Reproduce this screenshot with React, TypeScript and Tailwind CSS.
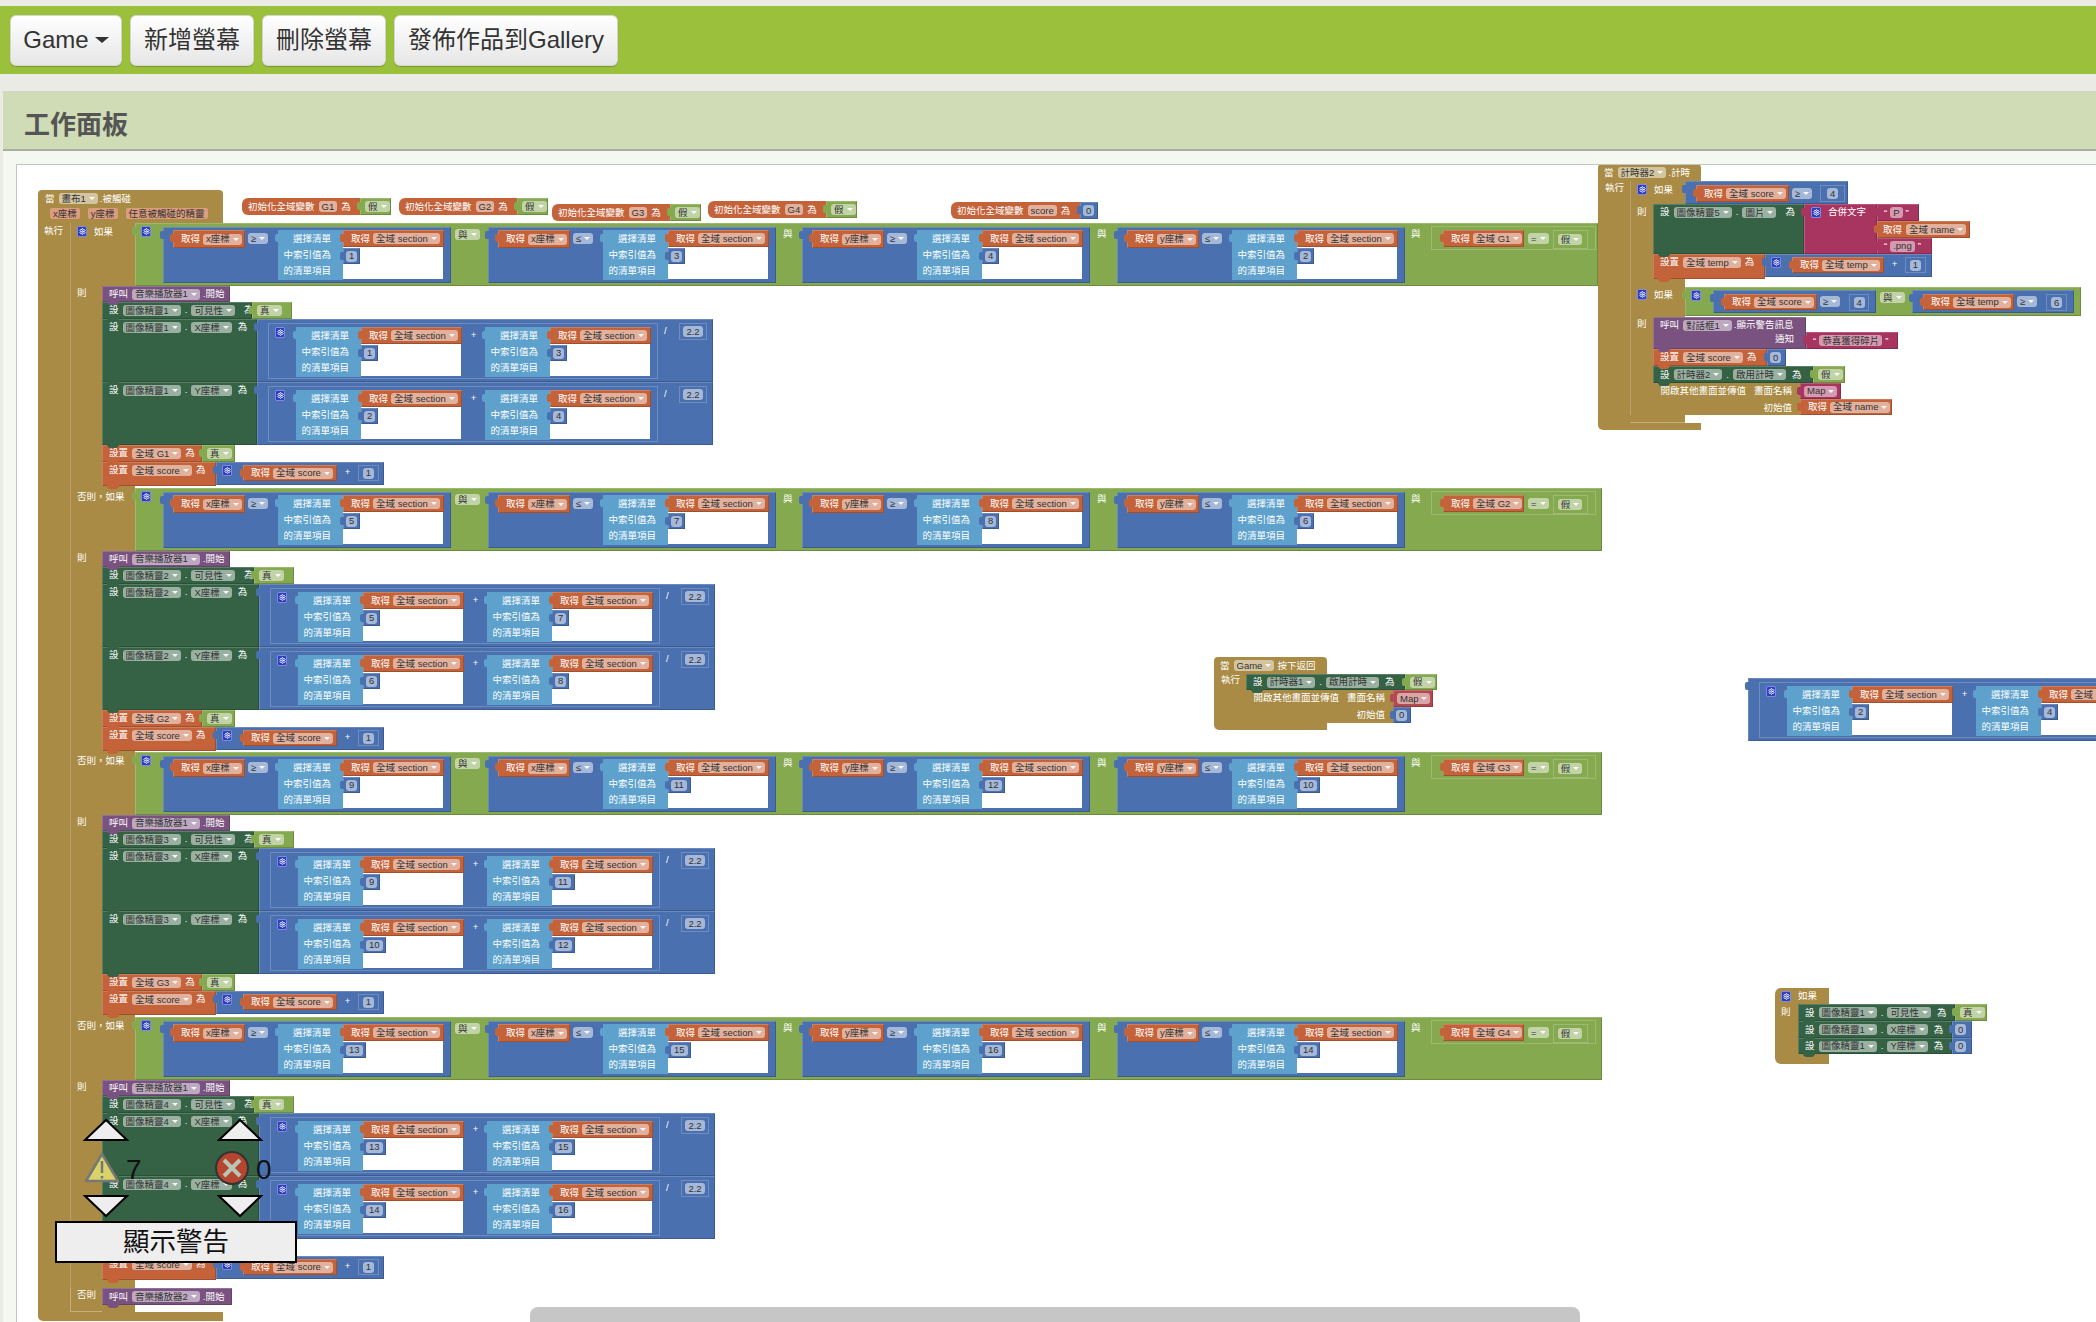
import type { ReactNode } from 'react';
import { Settings } from 'lucide-react';

const TAN = 'bg-[#a98b45]';
const GREEN = 'bg-[#84a94f]';
const BLUE = 'bg-[#4a70af]';
const SKY = 'bg-[#5ea1cd]';
const ORANGE = 'bg-[#c4623a]';
const PURPLE = 'bg-[#7a5280]';
const DARK = 'bg-[#356245]';
const PINK = 'bg-[#a83560]';
const BTN =
  'h-[51px] rounded-[6px] border border-[#d5d5d5] bg-gradient-to-b from-white to-[#e6e6e6] text-[24px] text-[#333] shadow-[0_1px_1px_rgba(0,0,0,0.2)]';

interface BlkProps {
  w: number;
  h: number;
  c: string;
  tab?: boolean;
  nub?: boolean;
  start?: boolean;
  pl?: number;
  pt?: number;
  gap?: number;
  children?: ReactNode;
}

// one block, sized from its props, contents flow inside
function Blk({ w, h, c, tab, nub, start, pl = 5, pt = 0, gap = 4, children }: BlkProps) {
  return (
    <div
      className={`relative shrink-0 flex whitespace-nowrap text-white ${start ? 'items-start' : 'items-center'} ${c} shadow-[inset_1px_1px_0_rgba(255,255,255,0.18),inset_-1px_-1px_0_rgba(0,0,0,0.18)]`}
      style={{ width: w, height: h, paddingLeft: pl, paddingTop: pt, gap }}
    >
      {tab && <span className={`absolute -left-[3px] top-[4px] w-[4px] h-[8px] rounded-l-[2px] ${c}`} />}
      {nub && <span className={`absolute left-[5px] -bottom-[3px] w-[12px] h-[4px] rounded-b-[4px] z-10 ${c}`} />}
      {children}
    </div>
  );
}

// a group placed freely on the workspace
function At({ x, y, children }: { x: number; y: number; children: ReactNode }) {
  return (
    <div className="absolute w-max" style={{ left: x, top: y }}>
      {children}
    </div>
  );
}

function Caret() {
  return <span className="inline-block ml-[3px] w-0 h-0 border-x-[3px] border-t-[3px] border-x-transparent border-t-white/90" />;
}

function F({ t, caret = true }: { t: string; caret?: boolean }) {
  return (
    <span className="inline-flex shrink-0 items-center h-[11px] px-[3px] rounded-[3px] bg-white/50 text-[#333] leading-none">
      {t}
      {caret && <Caret />}
    </span>
  );
}

function Gear() {
  return (
    <span className="shrink-0 flex items-center justify-center w-[10px] h-[11px] rounded-[2px] bg-[#2a3dc4] border border-white/40">
      <Settings size={7} color="#fff" strokeWidth={3} />
    </span>
  );
}

function Get({ w, name, h = 17 }: { w: number; name: string; h?: number }) {
  return (
    <Blk w={w} h={h} c={ORANGE} tab pl={8} gap={3}>
      <span>取得</span>
      <F t={name} />
    </Blk>
  );
}

function Num({ w, t, h = 16 }: { w: number; t: string; h?: number }) {
  return (
    <Blk w={w} h={h} c={BLUE} tab pl={3}>
      <F t={t} caret={false} />
    </Blk>
  );
}

function Bool({ w, t, h = 17 }: { w: number; t: string; h?: number }) {
  return (
    <Blk w={w} h={h} c={GREEN} tab pl={5}>
      <F t={t} />
    </Blk>
  );
}

// number sitting in an outlined socket
function Socket({ w, t, h = 17, caret = false }: { w: number; t: string; h?: number; caret?: boolean }) {
  return (
    <span className="shrink-0 flex items-center justify-center border border-white/20" style={{ width: w, height: h }}>
      <F t={t} caret={caret} />
    </span>
  );
}

function Str({ w, t, h = 17 }: { w: number; t: string; h?: number }) {
  return (
    <Blk w={w} h={h} c={PINK} tab pl={7} gap={3}>
      “ <F t={t} caret={false} /> ”
    </Blk>
  );
}

// 選擇清單 block with its section getter and index
function ListItem({ n }: { n: number }) {
  return (
    <div className="flex shrink-0">
      <div className={`relative flex flex-col items-end gap-[4px] w-[65px] h-[50px] pr-[12px] pt-[3px] leading-[12px] text-white whitespace-nowrap ${SKY}`}>
        <span className={`absolute -left-[3px] top-[4px] w-[4px] h-[8px] rounded-l-[2px] ${SKY}`} />
        <span>選擇清單</span>
        <span>中索引值為</span>
        <span>的清單項目</span>
      </div>
      <div className="w-[101px]">
        <Get w={101} name="全域 section" />
        <div className="w-[100px] h-[32px] pt-[1px] bg-white">
          <Num w={n > 9 ? 23 : 17} t={String(n)} />
        </div>
      </div>
    </div>
  );
}

function Cond({ v, op, n }: { v: string; op: string; n: number }) {
  return (
    <Blk w={288} h={56} c={BLUE} tab start pl={10} pt={3} gap={0}>
      <Get w={72} h={18} name={v} />
      <span className="w-[33px] pl-[3px] pt-[3px]">
        <F t={op} />
      </span>
      <ListItem n={n} />
    </Blk>
  );
}

function MathSet({ a, b }: { a: number; b: number }) {
  return (
    <Blk w={456} h={63} c={BLUE} tab start pl={11} pt={4} gap={0}>
      <div className="shrink-0 flex items-start w-[390px] h-[56px] pl-[6px] pt-[3px] border border-white/20">
        <Gear />
        <span className="w-[11px]" />
        <ListItem n={a} />
        <span className="w-[23px] pt-[2px] text-center leading-[12px]">+</span>
        <ListItem n={b} />
      </div>
      <span className="w-[21px] pl-[6px] pt-[2px] leading-[12px]">/</span>
      <Socket w={28} t="2.2" />
    </Blk>
  );
}

function SetProp({ w, h, s, p, gap = 5 }: { w: number; h: number; s: string; p: string; gap?: number }) {
  return (
    <Blk w={w} h={h} c={DARK} nub start pl={7} pt={3}>
      <span>設</span>
      <F t={s} />
      <span>.</span>
      <F t={p} />
      <span style={{ marginLeft: gap }}>為</span>
    </Blk>
  );
}

function SetVar({ w, h, v }: { w: number; h: number; v: string }) {
  return (
    <Blk w={w} h={h} c={ORANGE} nub start pl={7} pt={3}>
      <span>設置</span>
      <F t={v} />
      <span>為</span>
    </Blk>
  );
}

function Call({ w, h = 16, t }: { w: number; h?: number; t: string }) {
  return (
    <Blk w={w} h={h} c={PURPLE} nub pl={7}>
      <span>呼叫</span>
      <F t={t} />
      <span className="-ml-[1px]">.開始</span>
    </Blk>
  );
}

function PlusOne({ w, g, name }: { w: number; g: number; name: string }) {
  return (
    <Blk w={w} h={23} c={BLUE} tab start pl={6} pt={3} gap={0}>
      <Gear />
      <span className="w-[11px]" />
      <Get w={g} h={16} name={name} />
      <span className="w-[21px] text-center leading-[14px]">+</span>
      <Socket w={21} h={16} t="1" />
    </Blk>
  );
}

const ROWS = [
  { g: 'G1', s: '圖像精靈1', n: [1, 3, 4, 2], e: [1, 3, 2, 4], dx: 0, bar: 1463, tail: 2 },
  { g: 'G2', s: '圖像精靈2', n: [5, 7, 8, 6], e: [5, 7, 6, 8], dx: 2, bar: 1467, tail: 1 },
  { g: 'G3', s: '圖像精靈3', n: [9, 11, 12, 10], e: [9, 11, 10, 12], dx: 2, bar: 1467, tail: 2 },
  { g: 'G4', s: '圖像精靈4', n: [13, 15, 16, 14], e: [13, 15, 14, 16], dx: 2, bar: 1467, tail: 8 },
];

function IfRow({ g, s, n, e, dx, bar, tail, first }: (typeof ROWS)[number] & { first: boolean }) {
  return (
    <div className="flex">
      <div className={`relative w-[32px] flex flex-col pl-[6px] border-l border-white/20 leading-[12px] text-white whitespace-nowrap ${TAN}`}>
        <div className="h-[64px] pt-[3px] flex items-start gap-[7px]">
          {first ? (
            <>
              <Gear />
              <span>如果</span>
            </>
          ) : (
            <span className="relative z-10">否則，如果</span>
          )}
        </div>
        <span>則</span>
      </div>
      <div className="flex flex-col">
        <div className="flex">
          <div className={`w-[33px] h-[63px] ${TAN}`} />
          <Blk w={bar} h={63} c={GREEN} tab start pl={6} pt={3} gap={0}>
            <Gear />
            <span className="w-[12px]" />
            <div className="flex items-start pt-[1px]">
              <Cond v="x座標" op="≥" n={n[0]} />
              <span className="w-[37px] pl-[4px] pt-[2px]">
                <F t="與" />
              </span>
              <Cond v="x座標" op="≤" n={n[1]} />
              <span className="w-[26px] pl-[7px] pt-[1px] leading-[12px]">與</span>
              <Cond v="y座標" op="≥" n={n[2]} />
              <span className="w-[27px] pl-[7px] pt-[1px] leading-[12px]">與</span>
              <Cond v="y座標" op="≤" n={n[3]} />
              <span className="w-[26px] pl-[6px] pt-[1px] leading-[12px]">與</span>
              <div className="-mt-[1px] flex items-start gap-[4px] w-[165px] h-[24px] pl-[11px] pt-[3px] border border-white/20">
                <Get w={81} name={`全域 ${g}`} />
                <span className="pt-[3px]">
                  <F t="=" />
                </span>
                <Socket w={35} h={19} t="假" caret />
              </div>
            </div>
          </Blk>
        </div>
        <Call w={128} t="音樂播放器1" />
        <div className="flex">
          <SetProp w={150 + dx} h={17} s={s} p="可見性" />
          <Bool w={40} t="真" />
        </div>
        <div className="flex">
          <SetProp w={155 + dx} h={63} s={s} p="X座標" gap={2} />
          <MathSet a={e[0]} b={e[1]} />
        </div>
        <div className="flex">
          <SetProp w={155 + dx} h={63} s={s} p="Y座標" gap={2} />
          <MathSet a={e[2]} b={e[3]} />
        </div>
        <div className="flex">
          <SetVar w={100} h={17} v={`全域 ${g}`} />
          <Bool w={33} t="真" />
        </div>
        <div className="flex">
          <SetVar w={114} h={24} v="全域 score" />
          <PlusOne w={168} g={94} name="全域 score" />
        </div>
        <div className={`w-[33px] ${TAN}`} style={{ height: tail }} />
      </div>
    </div>
  );
}

function Init({ name, w }: { name: string; w: number }) {
  return (
    <div className={`flex items-center gap-[4px] pl-[6px] h-[17px] rounded-l-[6px] whitespace-nowrap text-white ${ORANGE}`} style={{ width: w }}>
      初始化全域變數 <F t={name} caret={false} /> 為
    </div>
  );
}

function TopInits() {
  const items = [
    { g: 'G1', x: 242, y: 198 },
    { g: 'G2', x: 399, y: 198 },
    { g: 'G3', x: 552, y: 204 },
    { g: 'G4', x: 708, y: 201 },
  ];
  return (
    <>
      {items.map((it) => (
        <At key={it.g} x={it.x} y={it.y}>
          <div className="flex">
            <Init name={it.g} w={118} />
            <Bool w={31} t="假" />
          </div>
        </At>
      ))}
      <At x={951} y={202}>
        <div className="flex">
          <Init name="score" w={129} />
          <Num w={18} h={17} t="0" />
        </div>
      </At>
    </>
  );
}

function MainEvent() {
  return (
    <At x={38} y={190}>
      <div className={`w-[185px] h-[33px] pt-[3px] rounded-t-[4px] flex flex-col gap-[4px] text-white whitespace-nowrap ${TAN}`}>
        <div className="flex items-center gap-[4px] pl-[7px]">
          當 <F t="畫布1" /> <span className="-ml-[2px]">.被觸碰</span>
        </div>
        <div className="flex items-center gap-[8px] pl-[12px] text-[#333]">
          <span className="h-[11px] leading-[11px] px-[3px] rounded-[2px] bg-[#dc9d7f]">x座標</span>
          <span className="h-[11px] leading-[11px] px-[3px] rounded-[2px] bg-[#dc9d7f]">y座標</span>
          <span className="h-[11px] leading-[11px] px-[3px] rounded-[2px] bg-[#dc9d7f]">任意被觸碰的精靈</span>
        </div>
      </div>
      <div className="flex">
        <div className={`w-[32px] pl-[6px] pt-[2px] leading-[12px] text-white ${TAN}`}>執行</div>
        <div className="flex flex-col">
          {ROWS.map((r, i) => (
            <IfRow key={r.g} {...r} first={i === 0} />
          ))}
          <div className="flex">
            <div className={`w-[32px] h-[24px] pl-[6px] pt-[1px] leading-[12px] text-white border-l border-b border-white/30 ${TAN}`}>否則</div>
            <div className="flex flex-col">
              <Call w={130} h={17} t="音樂播放器2" />
              <div className={`w-[33px] h-[7px] ${TAN}`} />
            </div>
          </div>
        </div>
      </div>
      <div className={`w-[185px] h-[9px] rounded-bl-[5px] ${TAN}`} />
    </At>
  );
}

function TimerEvent() {
  return (
    <At x={1598} y={164}>
      <div className={`w-[103px] h-[17px] pl-[6px] flex items-center gap-[4px] rounded-t-[4px] text-white whitespace-nowrap ${TAN}`}>
        當 <F t="計時器2" /> <span className="-ml-[2px]">.計時</span>
      </div>
      <div className="flex">
        <div className={`w-[32px] pl-[7px] pt-[1px] leading-[12px] text-white ${TAN}`}>執行</div>
        <div className="flex flex-col">
          <div className="flex">
            <div className={`w-[23px] flex flex-col pl-[6px] pt-[3px] border-l border-white/20 leading-[12px] text-white whitespace-nowrap ${TAN}`}>
              <div className="h-[22px] flex items-start gap-[7px]">
                <Gear />
                <span className="relative z-10">如果</span>
              </div>
              <span>則</span>
            </div>
            <div className="flex flex-col">
              <div className="flex">
                <div className={`w-[32px] h-[23px] ${TAN}`} />
                <Blk w={163} h={23} c={BLUE} tab start pl={11} pt={4} gap={3}>
                  <Get w={93} name="全域 score" />
                  <span className="pt-[3px]">
                    <F t="≥" />
                  </span>
                  <span className="w-[2px]" />
                  <Socket w={25} t="4" />
                </Blk>
              </div>
              <div className="flex">
                <Blk w={151} h={50} c={DARK} nub start pl={7} pt={3}>
                  <span>設</span>
                  <F t="圖像精靈5" />
                  <span>.</span>
                  <F t="圖片" />
                  <span className="ml-[5px]">為</span>
                </Blk>
                <Blk w={73} h={50} c={PINK} tab start pl={7} pt={3} gap={7}>
                  <Gear />
                  <span>合併文字</span>
                </Blk>
                <div className="flex flex-col">
                  <Str w={42} t="P" />
                  <Blk w={93} h={17} c={ORANGE} tab pl={6}>
                    取得 <F t="全域 name" />
                  </Blk>
                  <Str w={55} h={16} t=".png" />
                </div>
              </div>
              <div className="flex">
                <SetVar w={112} h={25} v="全域 temp" />
                <PlusOne w={167} g={92} name="全域 temp" />
              </div>
              <div className={`w-[32px] h-[8px] ${TAN}`} />
            </div>
          </div>
          <div className="flex">
            <div className={`w-[23px] flex flex-col pl-[6px] pt-[2px] border-l border-white/20 leading-[12px] text-white whitespace-nowrap ${TAN}`}>
              <div className="h-[29px] flex items-start gap-[7px]">
                <Gear />
                <span className="relative z-10">如果</span>
              </div>
              <span>則</span>
            </div>
            <div className="flex flex-col">
              <div className="flex">
                <div className={`w-[32px] h-[30px] ${TAN}`} />
                <Blk w={396} h={29} c={GREEN} tab start pl={6} pt={3} gap={0}>
                  <Gear />
                  <span className="w-[12px]" />
                  <Blk w={163} h={23} c={BLUE} tab start pl={11} pt={4} gap={3}>
                    <Get w={93} h={16} name="全域 score" />
                    <span className="pt-[2px]">
                      <F t="≥" />
                    </span>
                    <span className="w-[3px]" />
                    <Socket w={20} t="4" />
                  </Blk>
                  <span className="w-[36px] pl-[4px] pt-[2px]">
                    <F t="與" />
                  </span>
                  <Blk w={162} h={23} c={BLUE} tab start pl={11} pt={4} gap={3}>
                    <Get w={91} h={16} name="全域 temp" />
                    <span className="pt-[2px]">
                      <F t="≥" />
                    </span>
                    <span className="w-[3px]" />
                    <Socket w={21} t="6" />
                  </Blk>
                </Blk>
              </div>
              <div className="flex items-end">
                <Blk w={153} h={32} c={PURPLE} nub start pl={7} pt={3}>
                  <span>呼叫</span>
                  <F t="對話框1" />
                  <span className="-ml-[2px]">.顯示警告訊息</span>
                  <span className="absolute right-[12px] bottom-[4px] leading-[12px]">通知</span>
                </Blk>
                <Str w={92} t="恭喜獲得碎片" />
              </div>
              <div className="flex">
                <SetVar w={114} h={17} v="全域 score" />
                <Num w={19} h={17} t="0" />
              </div>
              <div className="flex">
                <Blk w={160} h={17} c={DARK} nub pl={7}>
                  設 <F t="計時器2" /> . <F t="啟用計時" /> <span className="ml-[2px]">為</span>
                </Blk>
                <Bool w={32} t="假" />
              </div>
              <div className="flex">
                <OpenScreen h={32} />
                <div className="flex flex-col">
                  <Blk w={41} h={16} c={PINK} tab pl={4}>
                    <F t="Map" />
                  </Blk>
                  <Get w={92} h={16} name="全域 name" />
                </div>
              </div>
            </div>
          </div>
          <div className={`w-[55px] h-[8px] border-b border-white/30 ${TAN}`} />
        </div>
      </div>
      <div className={`w-[103px] h-[7px] rounded-bl-[5px] ${TAN}`} />
    </At>
  );
}

function OpenScreen({ h }: { h: number }) {
  return (
    <div className={`w-[147px] flex flex-col items-end pr-[8px] pt-[2px] gap-[5px] leading-[12px] text-white whitespace-nowrap ${TAN}`} style={{ height: h }}>
      <div className="flex gap-[8px]">
        <span>開啟其他畫面並傳值</span>
        <span>畫面名稱</span>
      </div>
      <span>初始值</span>
    </div>
  );
}

function BackEvent() {
  return (
    <At x={1214} y={657}>
      <div className={`w-[113px] h-[17px] pl-[6px] flex items-center gap-[4px] rounded-t-[4px] text-white whitespace-nowrap ${TAN}`}>
        當 <F t="Game" /> <span className="-ml-[1px]">按下返回</span>
      </div>
      <div className="flex">
        <div className={`w-[32px] pl-[7px] leading-[12px] text-white ${TAN}`}>執行</div>
        <div className="flex flex-col">
          <div className="flex">
            <Blk w={159} h={16} c={DARK} nub pl={7}>
              設 <F t="計時器1" /> . <F t="啟用計時" /> <span className="ml-[2px]">為</span>
            </Blk>
            <Bool w={32} h={16} t="假" />
          </div>
          <div className="flex">
            <OpenScreen h={33} />
            <div className="flex flex-col">
              <Blk w={40} h={17} c="bg-[#b24a4f]" tab pl={4}>
                <F t="Map" />
              </Blk>
              <Num w={18} t="0" />
            </div>
          </div>
        </div>
      </div>
      <div className={`w-[113px] h-[7px] rounded-bl-[5px] ${TAN}`} />
    </At>
  );
}

function LooseIf() {
  const lines = [
    { p: 'X座標', h: 17 },
    { p: 'Y座標', h: 16 },
  ];
  return (
    <At x={1775} y={988}>
      <div className={`w-[54px] h-[16px] pl-[6px] flex items-center gap-[7px] rounded-tl-[6px] text-white whitespace-nowrap ${TAN}`}>
        <Gear />
        <span>如果</span>
      </div>
      <div className="flex">
        <div className={`w-[23px] pl-[6px] pt-[2px] leading-[12px] text-white ${TAN}`}>則</div>
        <div className="flex flex-col">
          <div className="flex">
            <Blk w={157} h={17} c={DARK} nub pl={7}>
              設 <F t="圖像精靈1" /> . <F t="可見性" /> <span className="ml-[2px]">為</span>
            </Blk>
            <Bool w={32} t="真" />
          </div>
          {lines.map((l) => (
            <div key={l.p} className="flex">
              <Blk w={154} h={l.h} c={DARK} nub pl={7}>
                設 <F t="圖像精靈1" /> . <F t={l.p} /> <span className="ml-[2px]">為</span>
              </Blk>
              <Num w={20} h={l.h} t="0" />
            </div>
          ))}
        </div>
      </div>
      <div className={`w-[54px] h-[10px] rounded-bl-[6px] ${TAN}`} />
    </At>
  );
}

// the warning indicator that floats over the workspace
function Warnings() {
  return (
    <div className="absolute left-[55px] top-[1115px] w-[242px] h-[148px] z-20">
      <svg className="absolute left-[25px] top-0 w-[190px] h-[105px]" viewBox="0 0 190 105">
        <path d="M5 25 L26 5 L47 25 Z M139 25 L160 5 L181 25 Z" fill="#eee" stroke="#000" strokeWidth="2" />
        <path d="M5 81 L47 81 L26 101 Z M139 81 L181 81 L160 101 Z" fill="#eee" stroke="#000" strokeWidth="2" />
        <path d="M22 39 L6 66 H38 Z" fill="#d9d36a" stroke="#777" strokeWidth="2.5" strokeLinejoin="round" />
        <path d="M22 46 V58 M22 61 V63.5" stroke="#777" strokeWidth="2.5" />
        <circle cx="152" cy="53" r="16" fill="#b5452f" stroke="#333" strokeWidth="2" />
        <path d="M144 45 L160 61 M160 45 L144 61" stroke="#b9c5b5" strokeWidth="4" />
      </svg>
      <span className="absolute left-[71px] top-[37px] text-[28px] leading-[36px] text-[#111]">7</span>
      <span className="absolute left-[201px] top-[37px] text-[28px] leading-[36px] text-[#111]">0</span>
      <div className="absolute left-0 bottom-0 w-[242px] h-[42px] flex items-center justify-center border-2 border-black bg-[#eeeeee] text-[26.5px] text-[#111]">
        顯示警告
      </div>
    </div>
  );
}

export default function App() {
  return (
    <div className="w-[2096px] h-[1322px] flex flex-col overflow-hidden bg-[#e9ebe4] font-['Liberation_Sans','Noto_Sans_CJK_TC',sans-serif]">
      <div className="h-[6px]" />
      <div className="h-[68px] flex items-center gap-[8px] pl-[10px] bg-[#9ac03c]">
        <button className={`w-[112px] flex items-center justify-center gap-[6px] ${BTN}`}>
          Game
          <span className="w-0 h-0 border-x-[7px] border-t-[6px] border-x-transparent border-t-[#333]" />
        </button>
        <button className={`px-[13px] ${BTN}`}>新增螢幕</button>
        <button className={`px-[13px] ${BTN}`}>刪除螢幕</button>
        <button className={`px-[13px] ${BTN}`}>發佈作品到Gallery</button>
      </div>
      <div className="h-[17px]" />
      <div className="flex-1 ml-[3px] flex flex-col min-h-0 bg-[#f5f8f0]">
        <div className="h-[60px] flex items-center pl-[21px] pt-[10px] bg-[#cfdcb6] border-t border-b-2 border-t-[#d4d4d4] border-b-[#a9aea0]">
          <h2 className="text-[26px] font-bold text-[#555]">工作面板</h2>
        </div>
        <div className="flex-1 relative mt-[13px] ml-[13px] bg-white border-l border-t border-[#c4c4c4] overflow-hidden text-[9.5px] leading-none">
          <div className="absolute -left-[17px] -top-[165px] w-[2096px] h-[1322px]">
            <MainEvent />
            <TopInits />
            <TimerEvent />
            <BackEvent />
            <At x={1748} y={678}>
              <MathSet a={2} b={4} />
            </At>
            <LooseIf />
            <Warnings />
            <div className="absolute left-[530px] top-[1307px] w-[1050px] h-[15px] rounded-t-[8px] bg-[#c6c6c6] z-20" />
          </div>
        </div>
      </div>
    </div>
  );
}
